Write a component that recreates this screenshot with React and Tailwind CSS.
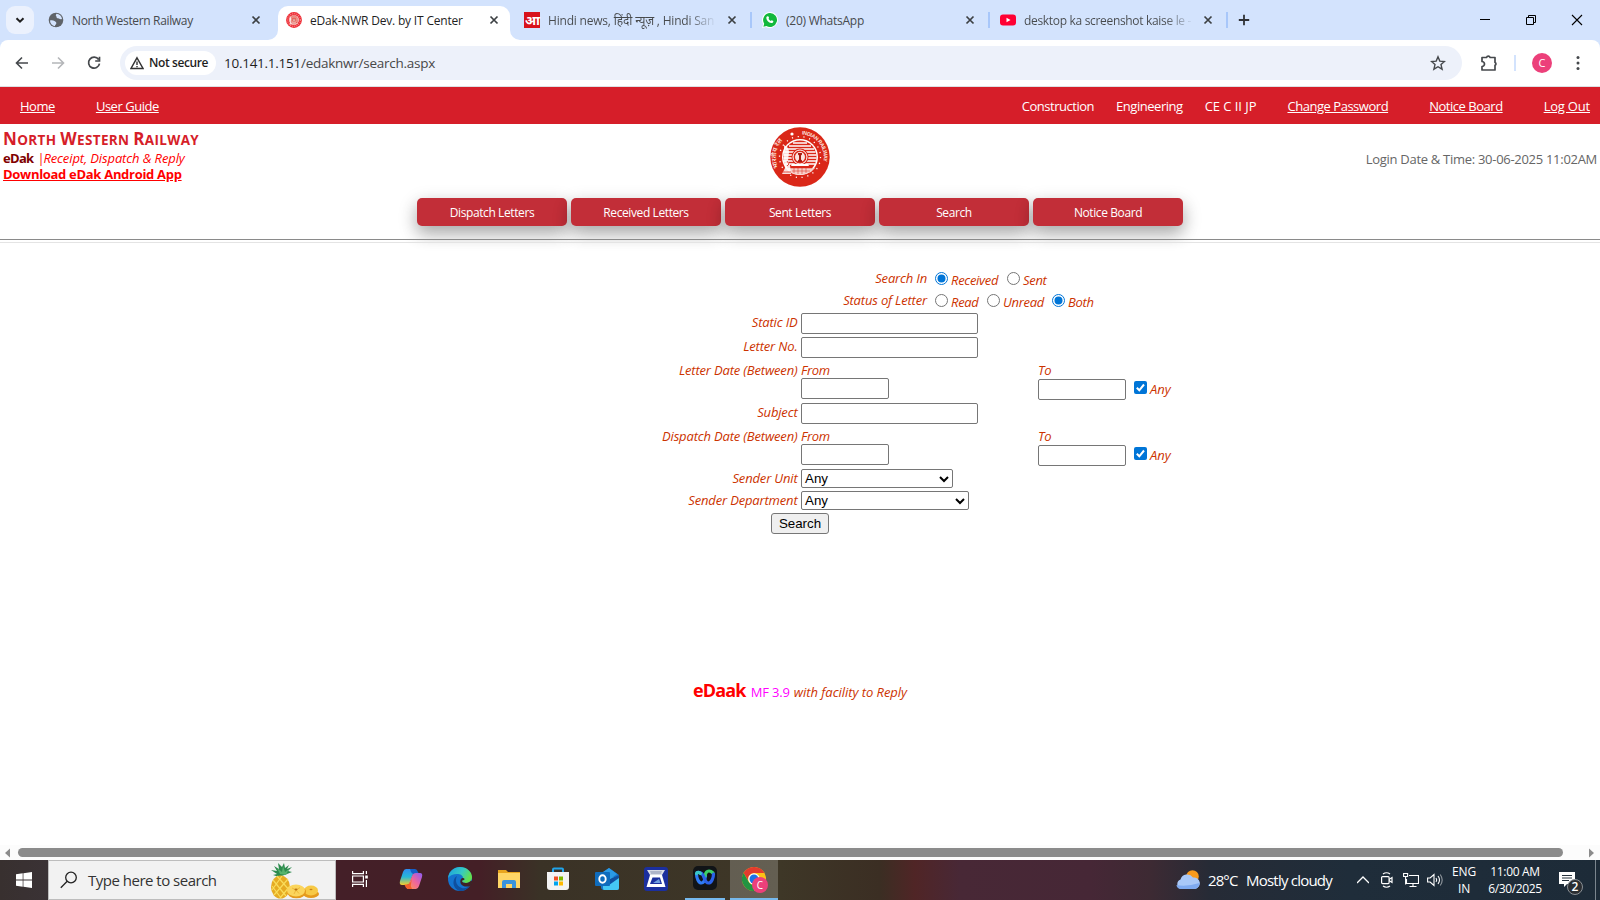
import React from 'react';

const Close = ({ className = '' }) => (
  <svg className={`h-4 w-4 shrink-0 ${className}`} viewBox="0 0 16 16" stroke="#3c4043" strokeWidth="1.7" fill="none">
    <path d="M4.5 4.5l7 7M11.5 4.5l-7 7" />
  </svg>
);

const Emblem = ({ className, small }) => (
  <svg className={className} viewBox="0 0 60 60">
    <circle cx="30" cy="30" r="29.700" fill={small ? '#ee2b33' : '#da2718'} />
    {small ? (
      <circle cx="30" cy="30" r="24" fill="none" stroke="#fff" strokeWidth="4" strokeDasharray="3 5" opacity=".55" />
    ) : (
      <>
        <defs>
          <path id="arcL" d="M8.500 40.500 A24 24 0 0 1 24 6.800" />
          <path id="arcR" d="M32 7.600 A22.500 22.500 0 0 1 51.500 40" />
        </defs>
        <text fill="#fbe3df" fontSize="6.6" fontFamily="Noto Sans, sans-serif" fontWeight="600">
          <textPath href="#arcL" startOffset="0">भारतीय रेल</textPath>
        </text>
        <text fill="#fbe3df" fontSize="5.3" fontFamily="Liberation Sans, sans-serif" fontWeight="600" letterSpacing="-0.35">
          <textPath href="#arcR" startOffset="0">INDIAN RAILWAY</textPath>
        </text>
        <circle cx="22" cy="7" r="1.600" fill="#fff" />
      </>
    )}
    <circle cx="30" cy="30" r="20.500" fill="none" stroke="#fff" strokeWidth="1.300" strokeDasharray="1.200 4.650" />
    <circle cx="30" cy="30" r="18" fill="#fff" />
    <circle cx="30" cy="30" r="16.500" fill="#da2718" />
    <g stroke="#fff" strokeWidth="1.700">
      <path d="M23 16h14M19 19h22M16 22h28M14.500 25h31M13.500 28h33M13.500 31h33M14 34h32M15 37h30" />
    </g>
    <path d="M15 41h30l-4 4q-11 5-20 1z" fill="#f7cfc9" />
    <path d="M20 41h22M22 44h18M24 40v6M28 40v7M32 40v7M36 40v6" stroke="#da2718" strokeWidth=".5" />
    <circle cx="30" cy="30" r="8.500" fill="#da2718" />
    <circle cx="30" cy="30" r="7" fill="none" stroke="#fff" strokeWidth="1" />
    <circle cx="30" cy="30" r="5" fill="#fbe3df" />
    <path d="M28 26h4v1.500l-1 1v4l1 1V35h-4v-1.500l1-1v-4l-1-1z" fill="#a81a10" />
    <path d="M22 37h16l1 2H21z" fill="#fff" />
    <path d="M14 18q5 2 5 7l-1 9 2 4 1 9H12l3-6-1-8z" fill="#fff" opacity=".85" />
    <path d="M17 34l2 3-2 2M13 45h8" stroke="#da2718" strokeWidth=".8" fill="none" />
  </svg>
);

const Tab = ({ icon, title, className, titleClass }) => (
  <div className={`flex h-10 w-[216px] shrink-0 items-center ${className}`}>
    {icon}
    <span className={`ml-2 mt-0.5 whitespace-nowrap text-[12px] text-[#474a4d] ${titleClass}`}>{title}</span>
    <Close className="ml-auto" />
  </div>
);

const TabStrip = () => (
  <div className="flex h-10 items-center bg-[#d3e3fd]">
    <div className="ml-1.5 flex h-7 w-7 shrink-0 items-center justify-center rounded-[9px] bg-[#ebf1fd]">
      <svg className="h-3 w-3" viewBox="0 0 12 12" fill="none" stroke="#1f1f1f" strokeWidth="2"><path d="M2.500 4.200l3.500 3.500 3.500-3.500" /></svg>
    </div>
    <Tab
      className="ml-3.5"
      titleClass="tracking-[-0.34px]"
      title="North Western Railway"
      icon={
        <svg className="h-4 w-4 shrink-0" viewBox="0 0 16 16">
          <circle cx="8" cy="8" r="7.300" fill="#5f6368" />
          <path d="M2 8.500c1.500-.5 3.500-.3 4.500.6s2 1 1.800 2.400-1.500 1-1.300 2.800C4 13.800 2 11.500 2 8.500zM8.500 1.800c2.800.3 5 2.200 5.500 5-.9.800-2 .5-2.700 0s-1.500-.2-2.300-.8-.1-1.300-.9-1.900.1-1.500.4-2.300z" fill="#d3e3fd" />
        </svg>
      }
    />
    <div className="ml-[14px] flex h-10 w-[242px] shrink-0 flex-col justify-end">
      <div className="flex items-end">
        <svg className="-ml-[10px] h-2.5 w-2.5 shrink-0" viewBox="0 0 10 10"><path d="M0 10A10 10 0 0 0 10 0V10z" fill="#fff" /></svg>
        <div className="flex h-[34px] w-[232px] shrink-0 items-center rounded-t-[10px] bg-white pb-1.5 pl-2 pr-2">
          <Emblem small className="h-4 w-4 shrink-0" />
          <span className="ml-2 mt-0.5 whitespace-nowrap text-[12px] tracking-[-0.19px] text-[#1f1f1f]">eDak-NWR Dev. by IT Center</span>
          <Close className="ml-auto" />
        </div>
        <svg className="h-2.5 w-2.5 shrink-0" viewBox="0 0 10 10"><path d="M10 10A10 10 0 0 1 0 0V10z" fill="#fff" /></svg>
      </div>
    </div>
    <Tab
      className="ml-1"
      titleClass="tracking-[-0.2px] bg-[linear-gradient(to_right,#474a4d_84%,#c4d3ec)] bg-clip-text text-transparent"
      title="Hindi news, हिंदी न्यूज़ , Hindi San"
      icon={
        <span className="flex h-4 w-4 shrink-0 items-center justify-center whitespace-nowrap bg-[#d8121b] font-['Noto_Sans'] text-[13px] font-bold leading-[16px] tracking-[-1px] text-white">आ</span>
      }
    />
    <span className="ml-2.5 h-4 w-0.5 bg-[#a8c7fa]" />
    <Tab
      className="ml-2.5"
      titleClass="tracking-[-0.25px]"
      title="(20) WhatsApp"
      icon={
        <svg className="h-4 w-4 shrink-0" viewBox="0 0 16 16">
          <path d="M8 0a8 8 0 1 1-4 15L0 16l1.200-3.900A8 8 0 0 1 8 0z" fill="#fff" />
          <path d="M8 1a7 7 0 1 1-3.600 13L1.400 14.700l.8-3A7 7 0 0 1 8 1z" fill="#12b83c" />
          <path d="M5.400 4.200l1.100.2.600 1.500-.6.900c.5 1 1.300 1.700 2.300 2.200l.9-.8 1.600.8c.2 1.400-.9 2.200-2 2.100C6.500 10.600 4.500 8.400 4.300 6c0-.8.400-1.500 1.100-1.800z" fill="#fff" />
        </svg>
      }
    />
    <span className="ml-2.5 h-4 w-0.5 bg-[#a8c7fa]" />
    <Tab
      className="ml-2.5"
      titleClass="tracking-[-0.32px] bg-[linear-gradient(to_right,#474a4d_84%,#c4d3ec)] bg-clip-text text-transparent"
      title="desktop ka screenshot kaise le -"
      icon={
        <svg className="h-4 w-4 shrink-0" viewBox="0 0 16 16"><rect y="2.500" width="16" height="11" rx="3" fill="#f03" /><path d="M6.500 5.700v4.600l4-2.300z" fill="#fff" /></svg>
      }
    />
    <span className="ml-2.5 h-4 w-0.5 bg-[#a8c7fa]" />
    <svg className="ml-2.5 h-3 w-3" viewBox="0 0 12 12" stroke="#303236" strokeWidth="1.800"><path d="M6 .8v10.400M.8 6h10.400" /></svg>
    <div className="ml-auto flex items-center">
      <svg className="h-4 w-4" viewBox="0 0 16 16" stroke="#000"><path d="M3 7.500h10" /></svg>
      <svg className="ml-[30px] h-4 w-4" viewBox="0 0 16 16" fill="none" stroke="#000"><path d="M3.500 5.500h7v7h-7zM5.500 5V3.500h7v7H11" /></svg>
      <svg className="ml-[30px] mr-[15px] h-4 w-4" viewBox="0 0 16 16" stroke="#000" strokeWidth="1.100"><path d="M3 3l10 10M13 3L3 13" /></svg>
    </div>
  </div>
);

const Toolbar = () => (
  <div className="bg-[#d3e3fd]">
    <div className="flex h-[47px] items-center rounded-t-lg border-b border-[#dde0e3] bg-white">
      <svg className="ml-[14px] h-4 w-4" viewBox="0 0 16 16" fill="none" stroke="#45484c" strokeWidth="1.600"><path d="M14 8H3M8 2.500L2.500 8 8 13.500" /></svg>
      <svg className="ml-5 h-4 w-4" viewBox="0 0 16 16" fill="none" stroke="#b4b6b9" strokeWidth="1.600"><path d="M2 8h11M8 2.500L13.500 8 8 13.500" /></svg>
      <svg className="ml-5 h-4 w-4" viewBox="0 0 16 16" fill="none" stroke="#45484c" strokeWidth="1.700"><path d="M12.600 4.500A5.500 5.500 0 1 0 13.500 8.700M13.500 1.800V6H9.200" /></svg>
      <div className="ml-[18px] flex h-[34px] w-[1342px] items-center rounded-full bg-[#edf1fa] pl-[5px] pr-4">
        <div className="flex h-6 w-[91px] items-center rounded-full bg-white pl-[5px]">
          <svg className="h-3.5 w-3.5 shrink-0" viewBox="0 0 14 14" fill="none" stroke="#333" strokeWidth="1.400"><path d="M7 1.800L13 12.500H1zM7 5.500v3.500M7 10v1.300" /></svg>
          <span className="ml-[5px] whitespace-nowrap text-[12px] font-semibold tracking-[-0.4px] text-[#1f1f1f]">Not secure</span>
        </div>
        <span className="ml-2 text-[13.5px] tracking-[-0.26px] text-[#474747]"><span className="text-[#1f1f1f]">10.141.1.151</span>/edaknwr/search.aspx</span>
        <svg className="ml-auto h-4 w-4" viewBox="0 0 16 16" fill="none" stroke="#45484c" strokeWidth="1.400"><path d="M8 1.800l1.800 4.300 4.700.4L11 9.600l1.100 4.600L8 11.700l-4.100 2.500L5 9.600 1.500 6.500l4.700-.4z" /></svg>
      </div>
      <svg className="ml-[18px] h-[18px] w-[18px]" viewBox="0 0 18 18" fill="none" stroke="#45484c" strokeWidth="1.700"><path d="M2 3.500h4.500a1.900 1.900 0 0 1 3.600 0H15v5a1.500 1.500 0 0 1 0 2.800V16H2v-3.500a2.400 2.400 0 0 0 0-5z" strokeLinejoin="round" /></svg>
      <span className="ml-4 h-4 w-0.5 bg-[#d3e3fd]" />
      <span className="ml-4 flex h-5 w-5 items-center justify-center rounded-full bg-[#ec407a] text-[11px] text-white">C</span>
      <svg className="ml-[18px] h-4 w-4" viewBox="0 0 16 16" fill="#45484c"><circle cx="8" cy="2.500" r="1.500" /><circle cx="8" cy="8" r="1.500" /><circle cx="8" cy="13.500" r="1.500" /></svg>
    </div>
  </div>
);

const RedBar = () => (
  <div className="flex h-[37px] items-center whitespace-nowrap bg-[#d61e29] pl-5 pr-2.5 pt-0.5 text-[13px] tracking-[-0.47px] text-white">
    <a className="underline">Home</a>
    <a className="ml-[41px] underline">User Guide</a>
    <span className="ml-auto">Construction</span>
    <span className="ml-[22px]">Engineering</span>
    <span className="ml-[22px] tracking-[-0.05px]">CE C II JP</span>
    <a className="ml-[31px] underline">Change Password</a>
    <a className="ml-[41px] underline">Notice Board</a>
    <a className="ml-[41px] tracking-[-0.2px] underline">Log Out</a>
  </div>
);

const Cap = ({ children }) => <span className="text-[17px]">{children}</span>;

const Banner = () => (
  <div className="flex h-[66px] justify-between">
    <div className="flex w-[400px] flex-col whitespace-nowrap pl-[3px] pt-[5px]">
      <div className="h-[20px] text-[13.5px] font-bold uppercase leading-[20px] tracking-[0.35px] text-[#d61e29]"><Cap>N</Cap>orth <Cap>W</Cap>estern <Cap>R</Cap>ailway</div>
      <div className="flex h-[17px] text-[13px] leading-[18px] text-[#f00]">
        <b className="tracking-[-0.7px] text-[#800000]">eDak</b>
        <span className="ml-[4px] w-[6px]">|</span>
        <i className="tracking-[-0.12px]">Receipt, Dispatch &amp; Reply</i>
      </div>
      <a className="text-[13px] font-bold leading-[17px] tracking-[-0.3px] text-[#f00] underline">Download eDak Android App</a>
    </div>
    <Emblem className="mt-[3px] h-[60px] w-[60px]" />
    <div className="w-[400px] whitespace-nowrap pr-[3px] pt-[25px] text-right text-[13px] leading-[20px] tracking-[-0.29px] text-[#666]">Login Date &amp; Time: 30-06-2025 11:02AM</div>
  </div>
);

const menu = ['Dispatch Letters', 'Received Letters', 'Sent Letters', 'Search', 'Notice Board'];

const Menu = () => (
  <div className="flex h-[49px] justify-center gap-1 pt-2">
    {menu.map((m) => (
      <div key={m} className="h-7 w-[150px] rounded-[5px] bg-[#c22e38] text-center text-[12px] leading-[30px] tracking-[-0.4px] text-white shadow-[0_8px_16px_rgba(0,0,0,0.2),0_6px_20px_rgba(0,0,0,0.19)]">{m}</div>
    ))}
  </div>
);

const Radio = ({ on }) => (
  <svg className="h-[13px] w-[13px] shrink-0 self-start" viewBox="0 0 13 13">
    <circle cx="6.500" cy="6.500" r="6" fill="#fff" stroke={on ? '#0075d7' : '#767676'} />
    {on && <circle cx="6.500" cy="6.500" r="4" fill="#0075d7" />}
  </svg>
);

const Check = () => (
  <svg className="h-[13px] w-[13px]" viewBox="0 0 13 13"><rect width="13" height="13" rx="2" fill="#0075d7" /><path d="M2.800 6.800l2.500 2.500L10 3.500" fill="none" stroke="#fff" strokeWidth="2" /></svg>
);

const Row = ({ label, h, children, labelW = 'w-[797.5px] mr-[-0.5px]' }) => (
  <div className={`flex ${h}`}>
    <div className={`${labelW} shrink-0 text-right leading-[20px] tracking-[-0.17px]`}>{label}</div>
    {children}
  </div>
);

const Box = ({ w = 'w-[177px]', mt = 'mt-px' }) => (
  <div className={`${w} ${mt} h-[21px] shrink-0 rounded-[2px] border border-[#767676] bg-white`} />
);

const DateRow = ({ label }) => (
  <Row label={label} h="h-[42px]">
    <div className="ml-1 w-[237px]">
      <div className="h-[18px] leading-[20px]">From</div>
      <Box w="w-[88px]" mt="mt-0" />
    </div>
    <div>
      <div className="h-[19px] leading-[20px]">To</div>
      <div className="flex">
        <Box w="w-[88px]" mt="mt-0" />
        <div className="ml-2 mt-0.5"><Check /></div>
        <span className="ml-[3px] leading-[20px] tracking-[0px]">Any</span>
      </div>
    </div>
  </Row>
);

const Select = ({ w }) => (
  <div className={`${w} ml-1 mt-px flex h-[19px] items-center justify-between rounded-[2px] border border-[#767676] bg-white pl-[3px] pr-[3px] font-[Liberation_Sans] text-[13.33px] not-italic tracking-normal text-black`}>
    <span className="leading-none">Any</span>
    <svg className="h-2.5 w-2.5" viewBox="0 0 10 10" fill="none" stroke="#000" strokeWidth="2"><path d="M1 3l4 4 4-4" /></svg>
  </div>
);

const Option = ({ on, children, className = '' }) => (
  <div className={`flex pt-1 ${className}`}>
    <Radio on={on} />
    <span className="ml-[3px] leading-[17px]">{children}</span>
  </div>
);

const Form = () => (
  <div className="h-[267px] whitespace-nowrap text-[13px] italic tracking-[-0.3px] text-[#c30]">
    <Row label="Search In" h="h-[22px]" labelW="w-[927px]">
      <Option on className="ml-2 w-[72px]">Received</Option>
      <Option>Sent</Option>
    </Row>
    <Row label="Status of Letter" h="h-[22px]" labelW="w-[927px]">
      <Option className="ml-2 w-[52px]">Read</Option>
      <Option className="w-[65px]">Unread</Option>
      <Option on>Both</Option>
    </Row>
    <Row label="Static ID" h="h-[24px]"><div className="ml-1"><Box /></div></Row>
    <Row label="Letter No." h="h-[24px]"><div className="ml-1"><Box /></div></Row>
    <DateRow label="Letter Date (Between)" />
    <Row label="Subject" h="h-[24px]"><div className="ml-1"><Box /></div></Row>
    <DateRow label="Dispatch Date (Between)" />
    <Row label="Sender Unit" h="h-[22px]"><Select w="w-[152px]" /></Row>
    <Row label="Sender Department" h="h-[22px]"><Select w="w-[168px]" /></Row>
    <div className="flex justify-center pt-px">
      <div className="h-[21px] w-[58px] rounded-[3px] border border-[#767676] bg-[#efefef] text-center font-[Liberation_Sans] text-[13.33px] not-italic leading-[19px] tracking-normal text-black">Search</div>
    </div>
  </div>
);

const HScroll = () => (
  <div className="flex h-[15px] items-center bg-[#fcfcfc]">
    <svg className="ml-1 h-2.5 w-2.5" viewBox="0 0 10 10" fill="#8b8b8b"><path d="M6 .5v9L1 5z" /></svg>
    <div className="ml-1 h-[9px] w-[1545px] rounded-full bg-[#8b8b8b]" />
    <svg className="ml-auto mr-1 h-2.5 w-2.5" viewBox="0 0 10 10" fill="#8b8b8b"><path d="M3 .5v9L8 5z" /></svg>
  </div>
);

const Pineapple = () => (
  <svg className="ml-auto mr-[15px] h-[37px] w-[52px]" viewBox="0 0 52 37">
    <path d="M11 15L5 13l4-1-6-4 6 1-3-5 5 3-1-6 4 4 2-4 1 5 4-3-2 4 5-2-4 4 4 1-5 2z" fill="#2d8b4e" />
    <path d="M12 12L9 6l5 4 1-6 2 6 4-3-3 6z" fill="#56b36c" />
    <ellipse cx="12.500" cy="25" rx="9.500" ry="11.500" fill="#e6ab22" />
    <path d="M5 18l13 16M4 24l9 12M9 14l13 15M20 17L6 33M22 24L12 36M14 14L4 28" stroke="#f9dc5a" strokeWidth="1.200" fill="none" />
    <ellipse cx="43" cy="32" rx="8" ry="4" fill="#e59a1c" />
    <ellipse cx="43" cy="28.500" rx="7" ry="5" fill="#f7c945" />
    <ellipse cx="28.500" cy="30" rx="9.500" ry="6.300" fill="#e59a1c" />
    <ellipse cx="28" cy="28.500" rx="9" ry="6" fill="#fbd55c" />
    <path d="M28 28l-4-2M28 28l4-2.500M28 28l-2 4M28 28l3 3.500" stroke="#eeb838" strokeWidth="1" />
    <ellipse cx="28" cy="27.500" rx="1.500" ry=".9" fill="#b87412" />
    <ellipse cx="43" cy="27.500" rx="1.500" ry=".8" fill="#c98216" />
  </svg>
);

const Slot = ({ children, className = '' }) => (
  <div className={`flex h-10 w-12 items-center justify-center border-b-2 ${className || 'border-transparent'}`}>{children}</div>
);

const Apps = () => (
  <div className="ml-0.5 flex gap-px">
    <Slot>
      <svg className="mr-1 h-4 w-4" viewBox="0 0 16 16" fill="none" stroke="#fff" strokeWidth="1.200"><path d="M.6 0v2.600h10.800V0M.6 16v-2.600h10.800V16M.6 5h10.800v6H.6zM14.400 0v3M14.400 9v7" /><path d="M13.200 4.500h2.600v3h-2.600z" fill="#fff" stroke="none" /></svg>
    </Slot>
    <Slot>
      <svg className="h-6 w-6" viewBox="0 0 24 24">
        <defs>
          <linearGradient id="cpa" x1="0" y1="0" x2="0" y2="1"><stop offset="0" stopColor="#2f8cf0" /><stop offset=".5" stopColor="#27b8d8" /><stop offset="1" stopColor="#f4cf2c" /></linearGradient>
          <linearGradient id="cpb" x1="1" y1="0" x2="0" y2="1"><stop offset="0" stopColor="#8b5cf6" /><stop offset=".5" stopColor="#f0659c" /><stop offset="1" stopColor="#ff9a4a" /></linearGradient>
        </defs>
        <path d="M7 2h9l-5 13q-1 3-4 3H3q-3 0-2-4L4 5q1-3 3-3z" fill="url(#cpa)" />
        <path d="M11 2h5q2 0 3 3l1 2h-5q-2 0-3-2z" fill="#1560c9" />
        <path d="M17 22H8l5-13q1-3 4-3h4q3 0 2 4l-3 9q-1 3-3 3z" fill="url(#cpb)" />
        <path d="M13 22H9q-2 0-3-3l-.5-1.500H9q2-.5 3-3.500l1-3-1 6q-1 2 1 5z" fill="#f4602c" />
      </svg>
    </Slot>
    <Slot>
      <svg className="h-6 w-6" viewBox="0 0 24 24">
        <defs><linearGradient id="edg" x1="0" y1="0" x2="1" y2=".4"><stop offset="0" stopColor="#1a9fe0" /><stop offset=".6" stopColor="#35c9c5" /><stop offset="1" stopColor="#62e050" /></linearGradient></defs>
        <circle cx="12" cy="12" r="12" fill="#1473cf" />
        <path d="M0 11C1 4 6 0 12 0c7 0 12 5 12 10 0 4-3 6-6 6-2.500 0-4-1-4-2 0-.8 1-1 1-3 0-2.500-2.500-4-6-4-4 0-7 1.500-9 4z" fill="url(#edg)" />
        <path d="M9 9c-2 4-1 8 2 10.500 4 3 8 2 11-1.500-2 4-6 6-10 6-4-1-7-5-6.500-9C5.800 12 7 10 9 9z" fill="#0f4f9f" />
        <path d="M14 14c0 1 1.500 2 4 2 2 0 4-1 5-2.500l1.500 1-1.500 4c-1.500 1-3 1-5 1-4.500 0-7-4-5-7.500 1-1.500 3-1 3.500 0 .5 1.500-2.500 1-2.500 2z" fill="#3f2226" />
      </svg>
    </Slot>
    <Slot>
      <svg className="h-[22px] w-[22px]" viewBox="0 0 22 22"><path d="M0 2h8l2 2h12v16H0z" fill="#e9a61f" /><path d="M0 5h22v15H0z" fill="#ffd666" /><path d="M4 20v-6q0-2 2-2h10q2 0 2 2v6h-4v-4H8v4z" fill="#3a93dc" /></svg>
    </Slot>
    <Slot>
      <svg className="h-6 w-6" viewBox="0 0 24 24"><path d="M7 6V2.500Q7 1.500 8 1.500h8q1 0 1 1V6" fill="none" stroke="#20a4ea" strokeWidth="2" /><path d="M1 5h22v15q0 3-3 3H4q-3 0-3-3z" fill="#f3f3f3" /><path d="M8 9.500h4v4H8z" fill="#f25022" /><path d="M13 9.500h4v4h-4z" fill="#7fba00" /><path d="M8 14.500h4v4H8z" fill="#00a4ef" /><path d="M13 14.500h4v4h-4z" fill="#ffb900" /></svg>
    </Slot>
    <Slot>
      <svg className="h-6 w-6" viewBox="0 0 24 24"><path d="M4 8l10-7 10 7v13q0 2-2 2H9q-3 0-3-3z" fill="#1677cc" /><path d="M8 5l6-4 8 6-8 6z" fill="#2a9ae5" /><path d="M8 13l16-4v12q0 2-2 2H9q-1 0-1-2z" fill="#45c8f5" /><path d="M10 14l14-6v3L14 18z" fill="#0f4fa0" /><rect y="5" width="15" height="14" rx="1" fill="#0f6cbd" /><ellipse cx="7.500" cy="12" rx="3.200" ry="3.700" fill="none" stroke="#fff" strokeWidth="1.900" /></svg>
    </Slot>
    <Slot>
      <svg className="h-6 w-6" viewBox="0 0 24 24"><rect width="24" height="24" rx="3" fill="#1b2f9e" /><path d="M3 3h18l-3 5H6z" fill="#d9dce6" /><path d="M6 4h12l-1 3H7z" fill="#aeb5c9" /><path d="M6 8h12l3.500 12h-19z" fill="#fff" /><path d="M8.500 10.500h7.500l2 6.500H6z" fill="#1b2f9e" /><path d="M15 12l1.500 4H9z" fill="#6f9fe0" /></svg>
    </Slot>
    <Slot className="border-transparent">
      <div className="-mb-0.5 flex h-10 w-10 items-center justify-center border-b-2 border-[#76b9ed]">
        <svg className="mb-0.5 h-6 w-6" viewBox="0 0 24 24"><rect width="24" height="24" rx="5" fill="#111417" /><g fill="none" strokeWidth="3.200" strokeLinecap="round"><path d="M3.500 8c0 4 2 9 5 9 2.500 0 3.500-4 4-7" stroke="#2f7bf5" /><path d="M12 10c.5-3 1.500-5 4-5 2 0 3 1 4 2" stroke="#3ccf6a" /><path d="M4 6.500c4-1 6 2 7 5s2 5.500 4.500 5.500c3 0 5-5 5-9" stroke="#2b62e8" /><path d="M3.500 7.500c.5-1.500 3-1.500 4 0" stroke="#39c7c5" /></g></svg>
      </div>
    </Slot>
    <Slot className="border-[#76b9ed] bg-white/20">
      <div className="relative h-6 w-6">
        <svg className="h-6 w-6" viewBox="0 0 24 24"><circle cx="12" cy="12" r="12" fill="#fbc116" /><path d="M1.600 6A12 12 0 0 1 22.400 6H12a6 6 0 0 0-5.500 8z" fill="#e33b2e" /><path d="M1.600 6A12 12 0 0 0 12 24l5-9-5 3a6 6 0 0 1-5.200-3z" fill="#229342" /><circle cx="12" cy="12" r="5.800" fill="#fff" /><circle cx="12" cy="12" r="4.500" fill="#1a73e8" /></svg>
        <span className="absolute left-[10px] top-[10px] flex h-4 w-4 items-center justify-center rounded-full bg-[#ec407a] text-[10px] leading-none text-white">C</span>
      </div>
    </Slot>
  </div>
);

const Tray = () => (
  <div className="ml-auto flex items-center whitespace-nowrap text-white">
    <svg className="h-6 w-6" viewBox="0 0 24 24"><circle cx="16.500" cy="8.500" r="6.300" fill="#f79a1e" /><path d="M5 21a5 5 0 0 1-.5-9.500A7 7 0 0 1 17 9.500a5.800 5.800 0 0 1 2 11.500z" fill="#a9c8f8" /><path d="M5 21a5 5 0 0 1-4.600-4q10 2 23 -2a6 6 0 0 1-4.400 6z" fill="#7faaf0" /></svg>
    <span className="ml-2 w-[31px] text-[15px] tracking-[-0.9px]">28°C</span>
    <span className="ml-[7px] w-[87px] text-[15px] tracking-[-0.78px]">Mostly cloudy</span>
    <svg className="ml-6 h-3 w-3" viewBox="0 0 12 12" fill="none" stroke="#fff" strokeWidth="1.300"><path d="M0 9l6-6 6 6" /></svg>
    <svg className="ml-3 h-4 w-3" viewBox="0 0 12 16" fill="none" stroke="#fff" strokeWidth="1.200"><rect x=".6" y="4.600" width="7.500" height="7" rx="1" /><path d="M8 7.500l3-2v5l-3-2M2 2q3.500-2.500 7 0M2 14q3.500 2.500 7 0" /></svg>
    <svg className="ml-2.5 h-4 w-4" viewBox="0 0 16 16" fill="none" stroke="#fff" strokeWidth="1.100"><path d="M6 3.500h9.500v8H3.500V7M10 11.500v3M6.500 14.500h7M.6 1.500h4v3h-4zM2.600 4.500v8" /></svg>
    <svg className="ml-2 h-4 w-4" viewBox="0 0 16 16" fill="none" stroke="#fff" strokeWidth="1.100"><path d="M.6 6h2.500L7 2.500v11L3.100 10H.6zM9 6q1.500 2 0 4M11 4q3 4 0 8" /><path d="M13.200 2.500q4 5.500 0 11" opacity=".5" /></svg>
    <div className="ml-[9px] w-[24px] text-center text-[12px] leading-[17px] tracking-[-0.2px]"><div>ENG</div><div>IN</div></div>
    <div className="ml-3 w-[54px] text-center text-[12px] leading-[17px] tracking-[-0.35px]"><div>11:00 AM</div><div>6/30/2025</div></div>
    <div className="relative ml-[17px] mr-[12px] h-6 w-6">
      <svg className="h-6 w-6" viewBox="0 0 24 24"><path d="M0 4h16v12H8l-3 3v-3H0z" fill="#fff" /><path d="M3 7.500h10M3 10h10M3 12.500h7" stroke="#26323d" /></svg>
      <span className="absolute left-[8px] top-[11px] flex h-4 w-4 items-center justify-center rounded-full border border-[#8a8f94] bg-[#2a2d31] text-[12px] font-semibold leading-none">2</span>
    </div>
    <span className="mr-1 h-10 w-px bg-[#7b858e]" />
  </div>
);

const Taskbar = () => (
  <div className="flex h-10 bg-[linear-gradient(to_right,#38302f_0px,#3a3235_48px,#441f28_336px,#441f26_480px,#3a3226_540px,#3e3727_780px,#3b2e23_880px,#502526_915px,#482836_960px,#462736_1090px,#3d2a33_1150px,#262b36_1210px,#1f2d3a_1350px,#1d2b38_1600px)]">
    <div className="flex w-12 items-center justify-center">
      <svg className="h-4 w-4" viewBox="0 0 16 16" fill="#fff"><path d="M0 2.200L6.700 1.300V7.600H0zM7.400 1.200L16 0V7.600H7.400zM0 8.400h6.700v6.300L0 13.800zM7.400 8.400H16V16L7.400 14.800z" /></svg>
    </div>
    <div className="flex h-10 w-[288px] items-center border border-[#bdbdbd] bg-[#f2f2f2] pl-[11px]">
      <svg className="h-[18px] w-[18px]" viewBox="0 0 18 18" fill="none" stroke="#222" strokeWidth="1.300"><circle cx="11" cy="6.500" r="5.300" /><path d="M7.200 10.300L.8 16.700" /></svg>
      <span className="ml-2.5 whitespace-nowrap text-[15px] tracking-[-0.5px] text-[#333]">Type here to search</span>
      <Pineapple />
    </div>
    <Apps />
    <Tray />
  </div>
);

export default function App() {
  return (
    <div className="flex h-[900px] w-[1600px] flex-col overflow-hidden bg-white font-['Open_Sans','Noto_Sans',sans-serif]">
      <TabStrip />
      <Toolbar />
      <RedBar />
      <Banner />
      <Menu />
      <div className="h-1 border-b border-t border-b-[#e4e4e4] border-t-[#8a8a8a]" />
      <div className="h-[25px]" />
      <Form />
      <div className="flex h-[310px] items-start justify-center pt-[142px]">
        <div className="flex items-baseline whitespace-nowrap text-[13px]">
          <b className="text-[18px] tracking-[-0.85px] text-[#f00]">eDaak</b>
          <span className="ml-[5px] tracking-[-0.15px] text-[#f0f]">MF 3.9</span>
          <i className="ml-1 tracking-[-0.05px] text-[#c30]">with facility to Reply</i>
        </div>
      </div>
      <HScroll />
      <Taskbar />
    </div>
  );
}
